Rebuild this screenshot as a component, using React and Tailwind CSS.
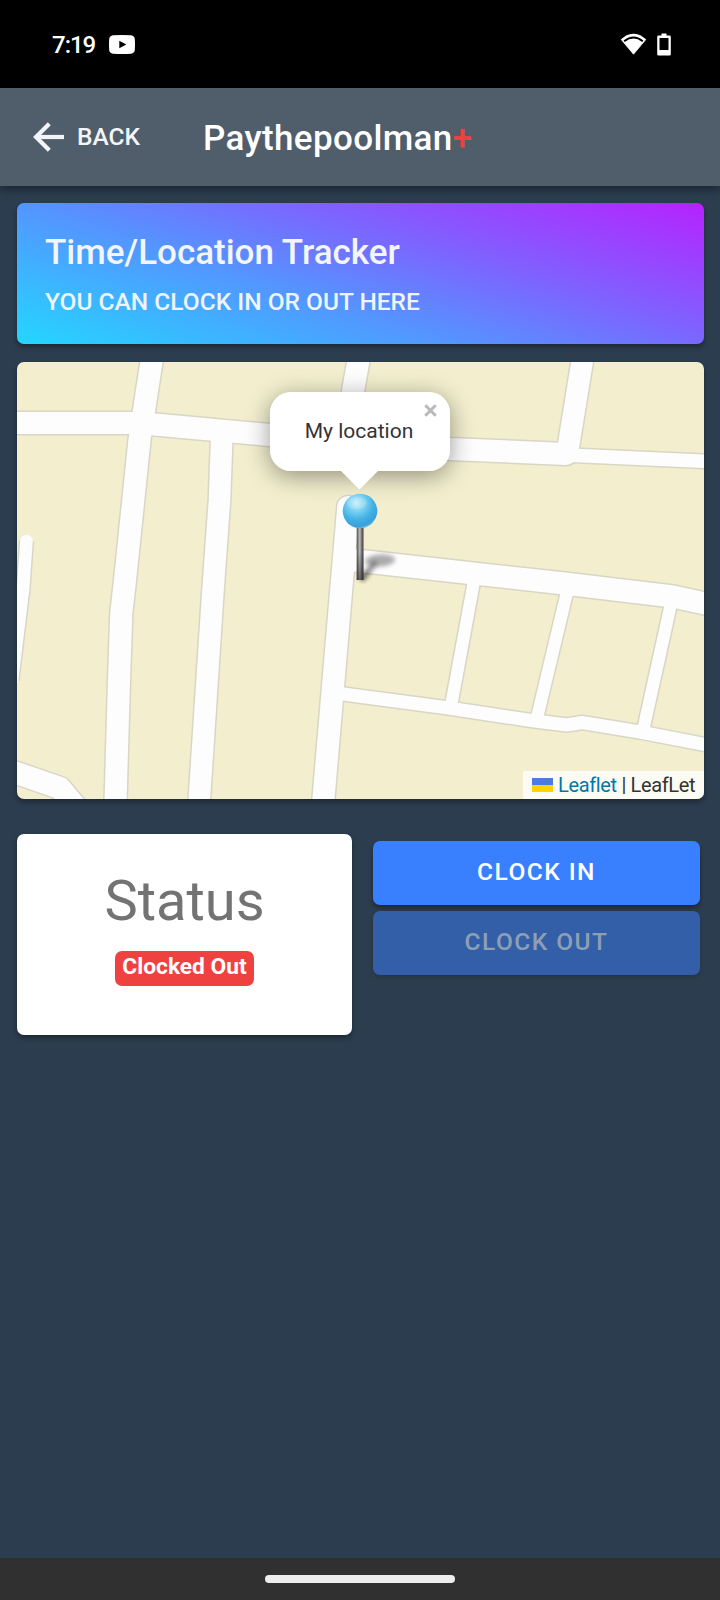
const roads = [
  { w: 22, d: 'M10 423 H130 L155 424.5 L267 434.7 L345 441.5 L450 449 L566 454', cap: 'round', edgeCap: 'round' },
  { w: 13.5, d: 'M566 455 L704 461.3 L712 461.7' },
  { w: 22, d: 'M153 352 L142.5 420 L139.5 440 L124.5 585 L121.3 613 L119 680 L115.3 810' },
  { w: 21.5, d: 'M222 430 L219.5 500 L213 590 L198.5 812' },
  { w: 22, d: 'M360 352 L353 391 L345 440' },
  { w: 22, d: 'M348.3 507 L341.2 590 L322.5 810', cap: 'round', edgeCap: 'round' },
  { w: 22, d: 'M345 559.5 L370 562 L560 583 L673 596.5 L712 605' },
  { w: 13, d: 'M338 693.3 L360 696.3 L445 707.5 L531 720.5 L567 725 L582 722.5 L640 732 L712 746' },
  { w: 12.2, d: 'M475 576 L451 706' },
  { w: 12.2, d: 'M569 584 L536.5 720' },
  { w: 12.2, d: 'M672.5 597 L642.5 733' },
  { w: 21.5, d: 'M583.7 352 L567 455' },
  { w: 12.5, d: 'M26.5 541 L23 590 L12 680', cap: 'round' },
  { w: 22, d: 'M8 770 L60 788 L80 812' },
];

function StreetMap() {
  return (
    <svg className="block h-full w-full" viewBox="17 362 687 437" preserveAspectRatio="none" fill="none">
      <rect x="17" y="362" width="687" height="437" fill="#f2eece" />
      {roads.map((r) => (
        <path key={r.d} d={r.d} stroke="#d9d6c6" strokeWidth={r.w + 3} strokeLinecap={r.edgeCap || 'butt'} strokeLinejoin="round" />
      ))}
      {roads.map((r) => (
        <path key={r.d} d={r.d} stroke="#fdfdfd" strokeWidth={r.w} strokeLinecap={r.cap || 'butt'} strokeLinejoin="round" />
      ))}
    </svg>
  );
}

function Pin() {
  return (
    <svg className="absolute left-[323px] top-[128px] h-[94px] w-[62px]" viewBox="340 490 62 94">
      <defs>
        <radialGradient id="ball" cx="0.4" cy="0.27" r="0.75">
          <stop offset="0" stopColor="#c4edfb" />
          <stop offset="0.3" stopColor="#7fd3f3" />
          <stop offset="0.65" stopColor="#41b1e4" />
          <stop offset="0.9" stopColor="#3a9fdb" />
          <stop offset="1" stopColor="#6cc0e6" />
        </radialGradient>
        <linearGradient id="needle" x1="0" x2="1" y1="0" y2="0">
          <stop offset="0" stopColor="#4c4c4c" />
          <stop offset="0.45" stopColor="#bdbdbd" />
          <stop offset="0.7" stopColor="#777" />
          <stop offset="1" stopColor="#3c3c3c" />
        </linearGradient>
        <linearGradient id="needleShade" x1="0" x2="0" y1="0" y2="1">
          <stop offset="0.5" stopColor="#222" stopOpacity="0" />
          <stop offset="1" stopColor="#222" stopOpacity="0.55" />
        </linearGradient>
        <linearGradient id="castLine" gradientUnits="userSpaceOnUse" x1="361" y1="580" x2="376" y2="562">
          <stop offset="0" stopColor="#000" stopOpacity="0.6" />
          <stop offset="1" stopColor="#000" stopOpacity="0.25" />
        </linearGradient>
        <filter id="soft" x="-30%" y="-60%" width="160%" height="220%">
          <feGaussianBlur stdDeviation="2" />
        </filter>
      </defs>
      <g filter="url(#soft)">
        <ellipse cx="380" cy="560.5" rx="15" ry="6" fill="#000" opacity="0.32" transform="rotate(-4 380 560)" />
        <path d="M361 580 L376 562" stroke="url(#castLine)" strokeWidth="6" />
      </g>
      <rect x="356.7" y="524" width="6.8" height="56" fill="url(#needle)" />
      <rect x="356.7" y="524" width="6.8" height="56" fill="url(#needleShade)" />
      <circle cx="360" cy="511" r="17.3" fill="url(#ball)" />
      <ellipse cx="357" cy="503" rx="10" ry="6" fill="#fff" opacity="0.18" />
    </svg>
  );
}

function StatusBar() {
  return (
    <div className="flex h-[88px] shrink-0 items-center justify-between bg-black pl-[52px] pr-[49px] text-white">
      <div className="flex items-center gap-[13px]">
        <span className="mt-[2px] w-[44px] whitespace-nowrap text-[24px] font-medium leading-none tracking-[-1px]">7:19</span>
        <svg className="h-[19px] w-[26px]" viewBox="0 0 26 19">
          <path fillRule="evenodd" fill="#fff" d="M4 0.3 Q13 -0.3 22 0.3 Q25.5 0.8 25.8 4 Q26.2 9.500 25.800 15 Q25.500 18.200 22 18.700 Q13 19.300 4 18.700 Q0.500 18.200 0.200 15 Q-0.200 9.500 0.200 4 Q0.500 0.800 4 0.300 Z M10.300 5.700 V13.300 L17.300 9.500 Z" />
        </svg>
      </div>
      <div className="flex items-center gap-[10px]">
        <svg className="h-[23px] w-[27px]" viewBox="0 0 27 23">
          <path d="M1.200 6.500 Q13.500 -4.300 25.800 6.500 L13.500 21.200 Z" fill="#fff" stroke="#fff" strokeWidth="0.800" strokeLinejoin="round" />
          <path d="M4.200 8.300 Q13.500 0.900 22.800 8.300" stroke="#000" strokeWidth="1.900" fill="none" />
        </svg>
        <svg className="h-[23px] w-[14px]" viewBox="0 0 14 23">
          <path fillRule="evenodd" fill="#fff" d="M4.500 0.500 h5 v2 h3 q1.300 0 1.300 1.300 v17.400 q0 1.300 -1.300 1.300 h-11 q-1.300 0 -1.300 -1.300 v-17.400 q0 -1.300 1.300 -1.300 h3 Z M2.500 5 v12 h9 v-12 Z" />
        </svg>
      </div>
    </div>
  );
}

export default function App() {
  return (
    <div className="flex h-[1600px] w-[720px] flex-col overflow-hidden bg-[#2c3d4f] font-[Roboto,sans-serif]">
      <StatusBar />
      <header className="z-10 flex h-[98px] shrink-0 items-center bg-[#505e6b] pl-[33px] shadow-[0_3px_9px_rgba(0,0,0,0.45)]">
        <svg className="mr-[13px] h-[30px] w-[31px]" viewBox="0 0 31 30" fill="none" stroke="#f1f4fb" strokeWidth="4.200">
          <path d="M16.300 1.700 L3 15 L16.300 28.300" strokeLinejoin="miter" />
          <path d="M3 15 H31" />
        </svg>
        <span className="w-[126px] text-[24.5px] font-medium leading-none text-[#f4f5f8]">BACK</span>
        <h1 className="mt-[2px] text-[35px] font-medium leading-none tracking-[0.36px] text-white">
          Paythepoolman<span className="text-[#f04141]">+</span>
        </h1>
      </header>

      <main className="flex grow flex-col px-[17px] pt-[17px]">
        <section className="flex h-[141px] w-[687px] flex-col rounded-[7px] bg-[linear-gradient(18deg,#24d6ff_0%,#5495ff_39%,#7c65ff_63%,#b622ff_100%)] pl-[28px] pt-[32px] shadow-[0_3px_5px_rgba(0,0,0,0.35)]">
          <h2 className="text-[35px] font-medium leading-[36px] text-[#f4f5f8]">Time/Location Tracker</h2>
          <p className="mt-[17px] text-[24.5px] font-medium leading-[28px] text-[#eef4fb]">YOU CAN CLOCK IN OR OUT HERE</p>
        </section>

        <section className="relative mt-[18px] h-[437px] w-[687px] overflow-hidden rounded-[7px] shadow-[0_3px_5px_rgba(0,0,0,0.35)]">
          <StreetMap />
          <div className="absolute left-[253px] top-[30px] h-[79px] w-[180px] rounded-[21px] shadow-[0_5px_24px_rgba(0,0,0,0.4)]" />
          <Pin />
          <div className="absolute left-[253px] top-[30px] flex h-[79px] w-[180px] items-center justify-center rounded-[21px] bg-white">
            <span className="mr-[2px] text-[21px] leading-none text-[#333]">My location</span>
            <svg className="absolute right-[13px] top-[12px] size-[13px]" viewBox="0 0 13 13" stroke="#b9b9b9" strokeWidth="3">
              <path d="M1.300 1.300 L11.700 11.700 M11.700 1.300 L1.300 11.700" />
            </svg>
            <svg className="absolute left-[69px] top-[78px] h-[20px] w-[42px]" viewBox="0 0 42 20">
              <path d="M1 0 H40 L20.500 19.500 Z" fill="#fff" />
            </svg>
          </div>
          <div className="absolute bottom-0 right-0 flex h-[28px] w-[181px] items-center whitespace-nowrap bg-white/80 pl-[9px] text-[20px] leading-none tracking-[-0.35px] text-[#333]">
            <svg className="mr-[5px] -mt-px h-[14px] w-[21px]" viewBox="0 0 21 14">
              <path fill="#4c7be1" d="M0 0h21v7H0z" />
              <path fill="#ffd500" d="M0 7h21v7H0z" />
            </svg>
            <span className="-mt-px text-[#0078a8]">Leaflet</span>
            <span className="-mt-px whitespace-pre"> | LeafLet</span>
          </div>
        </section>

        <div className="mt-[35px] flex">
          <section className="flex h-[201px] w-[335px] flex-col items-center rounded-[7px] bg-white pt-[35px] shadow-[0_3px_5px_rgba(0,0,0,0.35)]">
            <h2 className="text-[56px] leading-[64px] text-[#737373]">Status</h2>
            <span className="mt-[18px] flex h-[35px] w-[139px] items-center justify-center whitespace-nowrap rounded-[7px] bg-[#f04141] text-[22.75px] font-bold leading-none text-white">
              <span className="-mt-[2px]">Clocked Out</span>
            </span>
          </section>
          <div className="ml-[21px] mt-[7px] flex w-[327px] flex-col gap-[6px]">
            <button className="h-[64px] rounded-[7px] bg-[#3880ff] pb-px text-[24.5px] font-medium leading-none tracking-[1.47px] text-white shadow-[0_3px_4px_rgba(0,0,0,0.35)]">CLOCK IN</button>
            <button className="h-[64px] rounded-[7px] bg-[#325fa7] pb-px text-[24.5px] font-medium leading-none tracking-[1.47px] text-[#8e9fb4] shadow-[0_2px_4px_rgba(0,0,0,0.15)]">CLOCK OUT</button>
          </div>
        </div>
      </main>

      <footer className="flex h-[42px] shrink-0 justify-center bg-[#303030] pt-[17px]">
        <div className="h-[8px] w-[190px] rounded-full bg-[#ededed]" />
      </footer>
    </div>
  );
}
